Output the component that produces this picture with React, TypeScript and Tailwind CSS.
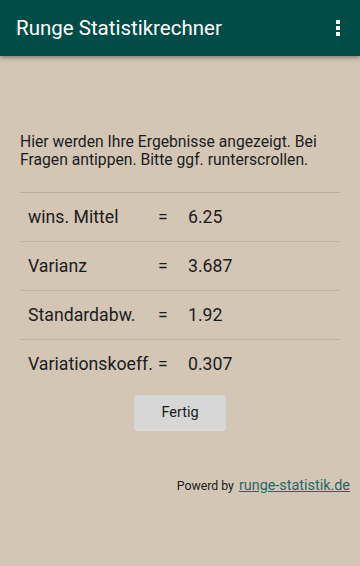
import React from "react";

const rows = [
  { label: "wins. Mittel", value: "6.25" },
  { label: "Varianz", value: "3.687" },
  { label: "Standardabw.", value: "1.92" },
  { label: "Variationskoeff.", value: "0.307" },
];

export default function App() {
  return (
    <div
      className="w-[360px] h-[566px] bg-[#d3c6b5] flex flex-col overflow-hidden"
      style={{ fontFamily: "Roboto, 'Liberation Sans', sans-serif" }}
    >
      <div className="h-[56px] shrink-0 bg-[#004d47] flex items-center justify-between pl-4 pr-[20px] shadow-[0_2px_4px_rgba(0,0,0,0.35)] relative">
        <h1 className="text-white text-[20.5px] leading-none">Runge Statistikrechner</h1>
        <div className="flex flex-col gap-[2px]">
          <span className="w-1 h-1 bg-white" />
          <span className="w-1 h-1 bg-white" />
          <span className="w-1 h-1 bg-white" />
        </div>
      </div>

      <div className="px-5 pt-[77px]">
        <p className="text-[15.7px] leading-[18px] text-[#1c1c1c]">
          Hier werden Ihre Ergebnisse angezeigt. Bei Fragen antippen. Bitte ggf. runterscrollen.
        </p>

        <div className="mt-[23px] border-t border-[#b9ad9e]">
          {rows.map((row, index) => (
            <div
              key={index}
              className={
                "h-[49px] flex items-center pl-2 text-[17.7px] text-[#1c1c1c] " +
                (index < rows.length - 1 ? "border-b border-[#bfb3a4]" : "")
              }
            >
              <span className="w-[130px]">{row.label}</span>
              <span className="w-[30px]">=</span>
              <span>{row.value}</span>
            </div>
          ))}
        </div>

        <div className="flex justify-center mt-[6px]">
          <button className="w-[92px] h-[36px] bg-[#d6d7d6] rounded-[2px] text-[14.5px] text-[#1c1c1c]">
            Fertig
          </button>
        </div>

        <div className="flex justify-end items-baseline gap-[5px] mt-[44px] mr-[-10px]">
          <span className="text-[12.3px] text-[#1c1c1c]">Powerd by</span>
          <a className="text-[14.4px] text-[#1b6b62] underline">runge-statistik.de</a>
        </div>
      </div>
    </div>
  );
}
